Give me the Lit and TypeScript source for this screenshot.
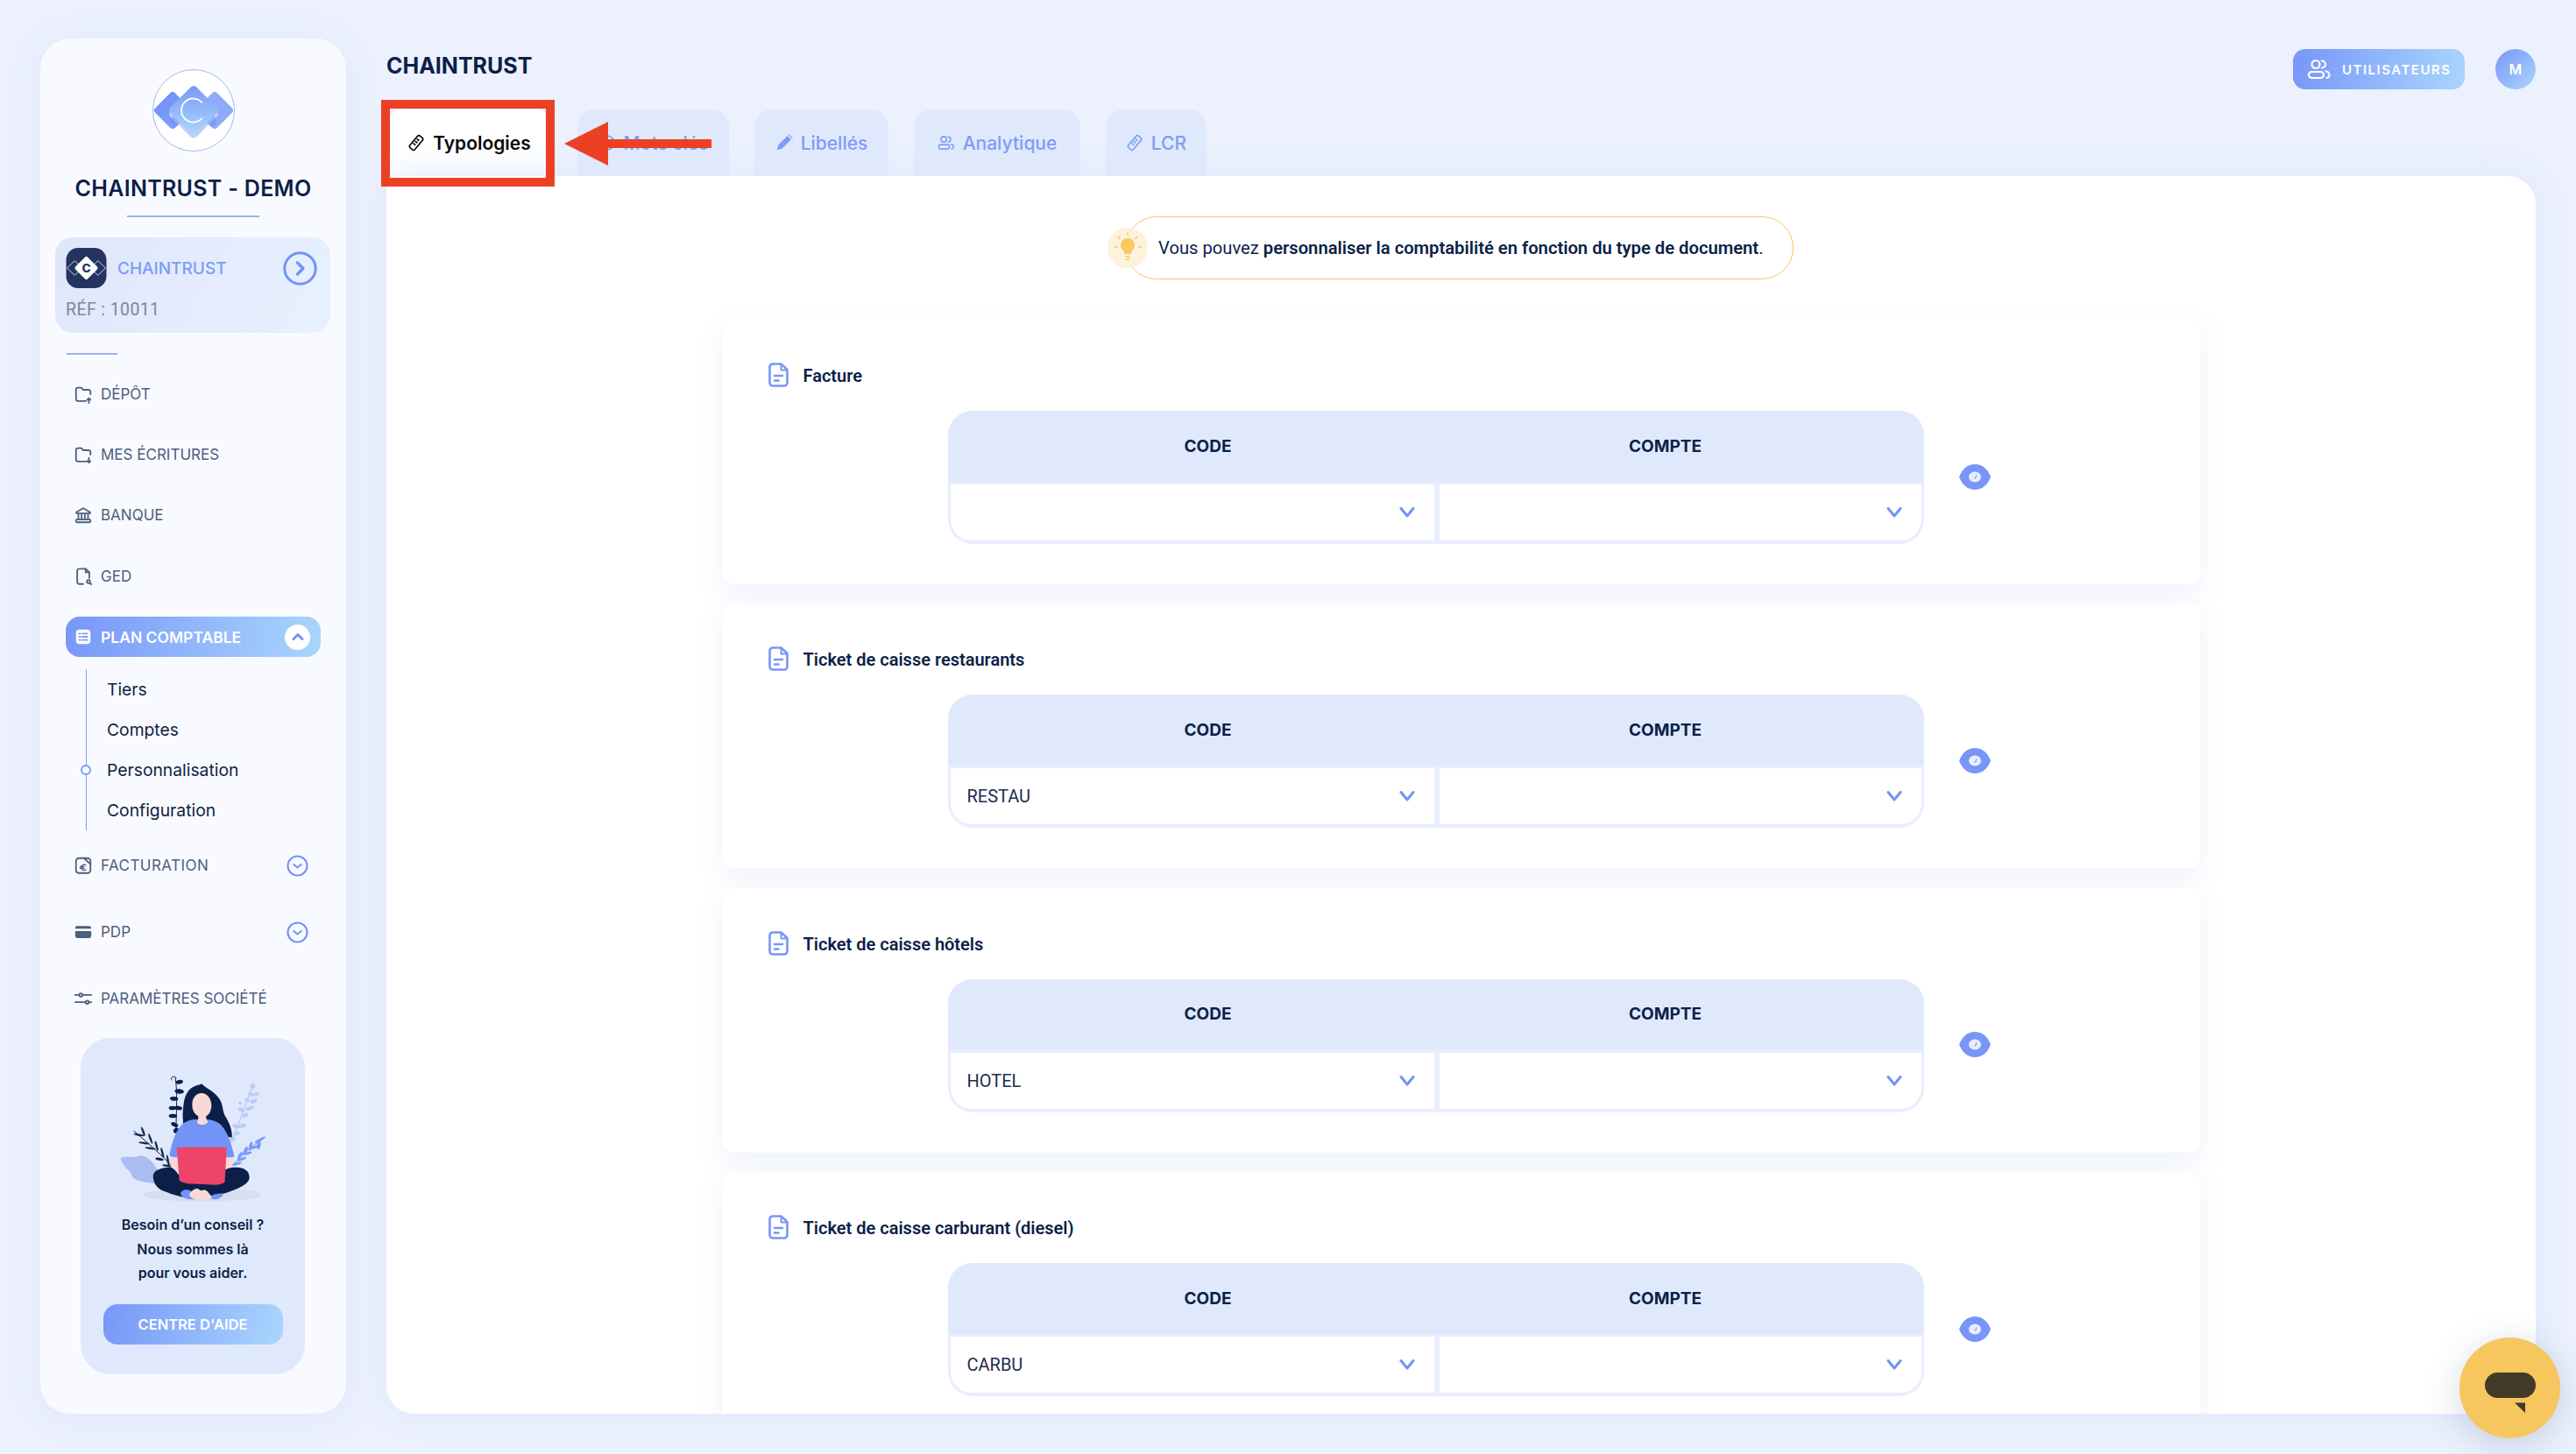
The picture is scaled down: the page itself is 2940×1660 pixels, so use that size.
import { LitElement, html, css, svg } from "lit";
import { customElement } from "lit/decorators.js";

const chevronDownCircle = html`<svg class="cc" viewBox="0 0 24 24"><circle cx="12" cy="12" r="10.6" fill="none" stroke="#7393f7" stroke-width="2"/><path d="M8 10.5l4 3.5 4-3.5" fill="none" stroke="#7393f7" stroke-width="2" stroke-linecap="round" stroke-linejoin="round"/></svg>`;

const nav = {
  up: svg`<path d="M15.5 20.5H5.5a2.5 2.5 0 0 1-2.5-2.5V6.5A2.5 2.5 0 0 1 5.5 4h4l2.2 2.5h6.8a2.5 2.5 0 0 1 2.5 2.5v3" /><path d="M19 23v-6M17 19l2-2 2 2"/>`,
  down: svg`<path d="M15.5 20.5H5.5a2.5 2.5 0 0 1-2.5-2.5V6.5A2.5 2.5 0 0 1 5.5 4h4l2.2 2.5h6.8a2.5 2.5 0 0 1 2.5 2.5v3"/><path d="M19 16v6M17 20l2 2 2-2"/>`,
  bank: svg`<path d="M3.5 8.5L12 3.5l8.500 5v1.500h-17zM6 10v7.500M10 10v7.500M14 10v7.500M18 10v7.500M4 17.500h16a1 1 0 0 1 1 1v1.500a1 1 0 0 1-1 1H4a1 1 0 0 1-1-1v-1.500a1 1 0 0 1 1-1z"/>`,
  ged: svg`<path d="M12 21.500H7a2.500 2.500 0 0 1-2.500-2.500V5A2.500 2.500 0 0 1 7 2.500h8l4.500 4.500v7"/><path d="M15 2.500V7h4.500" /><circle cx="18.500" cy="18.500" r="2"/><path d="M20 20l2 2"/>`,
  fact: svg`<rect x="3" y="3" width="18" height="18.500" rx="3.500"/><path d="M13 3l7.500 7"/><path d="M15 11.500a3.500 3.500 0 1 0 0 6M8 13.500h5M8 15.500h5" stroke-width="1.500"/>`,
  params: svg`<path d="M2 7.500h5M11 7.500h11M2 16.500h13M19 16.500h3"/><circle cx="9" cy="7.500" r="2"/><circle cx="17" cy="16.500" r="2"/>`,
};

const navIcon = (p: unknown) => html`<svg class="ni" viewBox="0 0 24 24">${p}</svg>`;

const ruler = (c: string) => html`<svg class="ti" viewBox="0 0 24 24" fill="none" stroke=${c} stroke-width="2" stroke-linecap="round" stroke-linejoin="round"><rect x="7.500" y="1.500" width="9" height="21" rx="2.500" transform="rotate(40 12 12)"/><path d="M13.500 7l2 1.700M11 10l2 1.700M8.500 13l2 1.700"/></svg>`;
const users = (c: string, cls = "ti") => html`<svg class=${cls} viewBox="0 0 28 24" fill="none" stroke=${c} stroke-width="2.200" stroke-linecap="round"><circle cx="10" cy="6.500" r="4.500"/><rect x="2" y="15" width="17" height="7" rx="3.500"/><path d="M17 2.500a4 4 0 0 1 0 8M21.500 14.500a4 4 0 0 1 4 4 3 3 0 0 1-3 3.300"/></svg>`;

const docIcon = html`<svg class="doc" viewBox="0 0 23 28" fill="none" stroke="#7896f8" stroke-width="2.600" stroke-linejoin="round" stroke-linecap="round"><path d="M14.500 1.500H5A3.500 3.500 0 0 0 1.500 5v18A3.500 3.500 0 0 0 5 26.500h13a3.500 3.500 0 0 0 3.500-3.500V8z"/><path d="M14.500 2v6.500h6.500" stroke-width="2"/><path d="M7 15h9M7 20.500h4.500"/></svg>`;
const chev = html`<svg class="chev" viewBox="0 0 18 14" fill="none" stroke="#7393f7" stroke-width="3" stroke-linecap="round" stroke-linejoin="round"><path d="M2 2.500l7 8.500 7-8.500"/></svg>`;
const eye = html`<svg class="eye" viewBox="0 0 36 29"><path fill="#7896f8" d="M0 14.500C3.500 5 10 0 18 0s14.500 5 18 14.500C32.500 24 26 29 18 29S3.500 24 0 14.500z"/><ellipse cx="18" cy="14.500" rx="7" ry="6" fill="#e8eeff"/><path d="M20 11.500c.8 3-1 5.500-3.500 5 2 -.5 2.200-3 3.500-5z" fill="#7896f8"/></svg>`;

const leaf = (x: number, y: number, rx: number, ry: number, a: number) =>
  svg`<ellipse cx=${x} cy=${y} rx=${rx} ry=${ry} transform="rotate(${a} ${x} ${y})"/>`;

const illustration = html`<svg class="illu" viewBox="0 0 600 510">
  <ellipse cx="332" cy="462" rx="202" ry="23" fill="#d5dff0"/>
  <path fill="#a9bdf0" d="M52 338c12-12 40 0 62-8 18-6 36 6 52 26 16 22 30 44 38 68-20 4-50-2-72-6-18-4-40-10-44-28-4-14-22-16-36-52z"/>
  <g fill="#bccdf5"><path d="M505 92L432 282" stroke="#bccdf5" stroke-width="4"/>
    <circle cx="505" cy="90" r="9"/>
    ${leaf(516,118,12,6,-15)}${leaf(498,118,10,6,30)}${leaf(508,142,13,7,-15)}${leaf(486,138,9,6,40)}${leaf(495,166,14,7,-20)}${leaf(466,172,12,7,30)}${leaf(480,190,12,7,-20)}${leaf(462,148,6,6,0)}${leaf(470,226,14,7,-15)}${leaf(448,228,12,7,20)}${leaf(450,252,12,6,-15)}${leaf(436,272,12,7,-30)}</g>
  <g fill="#7b99f8" stroke="#7b99f8"><path d="M548 266C510 290 470 320 436 362" stroke-width="3" fill="none"/>
    ${leaf(530,274,20,4,-30)}${leaf(526,292,6,14,10)}${leaf(498,296,5,15,15)}${leaf(480,312,5,15,25)}${leaf(462,328,5,14,30)}${leaf(510,300,14,4,-20)}${leaf(488,320,14,4,-15)}${leaf(468,340,16,4,-20)}${leaf(450,356,18,4,-15)}</g>
  <g fill="#0c1f48"><path d="M244 64c-6-12-22-6-16 6M240 62c8 40 4 120 2 190" fill="none" stroke="#0c1f48" stroke-width="3"/>
    ${leaf(254,76,13,7,-10)}${leaf(254,108,16,8,5)}${leaf(236,133,14,7,5)}${leaf(250,165,14,7,5)}${leaf(230,165,12,7,5)}${leaf(232,192,14,7,0)}${leaf(238,222,13,7,25)}${leaf(243,242,10,8,-40)}</g>
  <g fill="#0c1f48" stroke="#0c1f48"><path d="M98 243C140 280 200 330 235 372" stroke-width="3" fill="none"/>
    ${leaf(116,257,18,3,10)}${leaf(130,245,3,16,-20)}${leaf(133,285,18,3,8)}${leaf(155,270,3,18,-20)}${leaf(155,303,18,3,8)}${leaf(176,295,3,17,-15)}${leaf(186,340,14,4,10)}${leaf(196,318,3,17,-15)}${leaf(215,345,3,20,-10)}${leaf(212,363,16,3,10)}</g>
  <path fill="#0c1f48" d="M330 82c-8 6-32 6-46 26-14 18-16 46-18 72-2 22 4 36 0 50l168 36c2-28-10-52-22-72-12-18-6-40-22-62-18-24-46-36-60-50z"/>
  <path fill="#f9d9d5" d="M224 322c-4 14-6 40 12 60l30-8-10-54z M436 322c4 14 6 40-12 60l-30-8 10-54z"/>
  <path fill="#7393f7" d="M270 216c18-12 34-12 44-12l34 0c14 2 34 4 50 20 16 16 36 60 44 108-20 4-36 0-48-2l-2 30H256l-4-28c-10 4-22 2-32-4 8-50 26-96 50-112z"/>
  <path fill="#f9d9d5" d="M330 114c18 0 34 18 34 42 0 20-10 34-18 36-2 10 4 16 6 22-10 12-30 12-38 0 4-8 6-14 4-22-12-6-20-18-20-38 0-24 14-40 32-40z"/>
  <path fill="#0c1f48" d="M164 396c4-20 30-28 60-28 20 4 30 40 60 54l94-4c14-30 30-50 70-50 30 0 46 14 46 34 0 24-40 40-70 50-22 8-50 14-64 16-16-4-30-22-46-22-16 0-30 24-48 24-20-4-50-14-70-22-16-8-32-24-32-52z"/>
  <path fill="#7393f7" d="M258 458c2-12 18-16 30-12 12 4 22 20 26 30-20 4-50 2-56-18z M354 468c16-6 34-12 50-10-2 14-20 20-30 20-8 0-16-4-20-10z"/>
  <path fill="#f9d9d5" d="M288 460c8-12 22-22 30-18 6 4 8 6 12 6 6-2 10-4 16 0 6 4 14 14 20 24-12 6-30 6-40 4-14 4-34 2-38-16z"/>
  <path fill="#ee4469" d="M249 299h163c3 0 4 2 4 5l-6 112c-2 6-10 10-30 12l-100-4c-16-4-24-8-26-12l-9-108c0-3 1-5 4-5z"/>
</svg>`;

const logo = html`<svg class="logo" viewBox="0 0 94 94">
  <defs>
    <linearGradient id="lg1" x1="0" y1="0" x2="1" y2="1"><stop offset="0" stop-color="#7796f8"/><stop offset="1" stop-color="#aedafc"/></linearGradient>
    <linearGradient id="lg2" x1="0" y1="0" x2="1" y2="0"><stop offset="0" stop-color="#7393f7"/><stop offset="1" stop-color="#7f9ff8"/></linearGradient>
  </defs>
  <circle cx="47" cy="47" r="46.500" fill="#fff" stroke="#a4b6ee" stroke-width="1"/>
  <rect x="7" y="31" width="32" height="32" rx="4" fill="url(#lg2)" transform="rotate(45 23 47)"/>
  <rect x="55" y="31" width="32" height="32" rx="4" fill="#8eabf9" transform="rotate(45 71 47)"/>
  <rect x="26" y="30" width="42" height="42" rx="5" fill="#c5d1fa" transform="rotate(45 47 51)"/>
  <path d="M26 47l10 10-10 10-6-6zM68 47l-10 10 10 10 6-6z" fill="#6f8ff5" opacity=".55"/>
  <rect x="26" y="26" width="42" height="42" rx="5" fill="url(#lg1)" transform="rotate(45 47 47)"/>
  <path d="M57 38.500a13.500 13.500 0 1 0 0 17" fill="none" stroke="#fff" stroke-width="1.800"/>
</svg>`;

const companyIcon = html`<svg class="co" viewBox="0 0 47 47">
  <rect width="47" height="47" rx="14" fill="#253360"/>
  <g fill="none" stroke="#cfd6ea" stroke-width="1"><path d="M10 15L1 23.500 10 32M37 15l9 8.500-9 8.500M10 15l7 7M10 32l7-7M37 15l-7 7M37 32l-7-7"/></g>
  <rect x="13.500" y="13.500" width="20" height="20" rx="2" fill="#fff" transform="rotate(45 23.500 23.500)"/>
  <text x="23.500" y="28.500" text-anchor="middle" font-family="Inter, sans-serif" font-weight="800" font-size="14" fill="#253360">C</text>
</svg>`;

@customElement("app-root")
export class AppRoot extends LitElement {
  static styles = css`
    :host { display: block; width: 2940px; height: 1660px; position: relative; overflow: hidden; background: #ecf1fd; font-family: "Inter", "Liberation Sans", sans-serif; color: #0c1f48; }
    * { box-sizing: border-box; }
    .root { display: flex; gap: 46px; height: 1660px; padding: 44px 46px 46px; }

    .side { width: 349px; flex: none; background: #f9faff; border-radius: 34px; box-shadow: 0 4px 40px #dfe6fc; padding-top: 35px; display: flex; flex-direction: column; }
    .logo { width: 94px; height: 94px; align-self: center; display: block; }
    .brand { margin-top: 27px; text-align: center; font-weight: 600; font-size: 25px; line-height: 30px; color: #0c1f48; letter-spacing: .3px; white-space: nowrap; }
    .rule { width: 151px; height: 2px; background: #9db0ee; margin: 16px auto 0 99px; }
    .company { margin: 23px 18px 0 17px; height: 109px; border-radius: 20px; background: linear-gradient(120deg, #dfe6fb, #e8f1ff); padding: 12px 0 0 12px; }
    .co-row { display: flex; align-items: center; }
    .co { width: 47px; height: 46px; flex: none; }
    .co-name { margin-left: 12px; font-size: 19px; font-weight: 500; color: #7a9bf8; flex: 1; }
    .co-arrow { width: 39px; height: 39px; margin-right: 15px; flex: none; }
    .ref { font-family: "Roboto", sans-serif; font-size: 19.500px; color: #7c869f; margin-top: 13px; line-height: 24px; letter-spacing: .4px; }
    .rule2 { width: 58px; height: 1.500px; background: #9db0ee; margin: 23px 0 0 30px; }

    .group { display: flex; flex-direction: column; margin: 0 29px; }
    .group.a { gap: 23.400px; margin-top: 22px; }
    .group.b { gap: 30px; margin-top: 17px; }
    .item { height: 46px; display: flex; align-items: center; padding-left: 9px; font-size: 17px; color: #4e5e80; white-space: nowrap; }
    .item .label { margin-left: 9px; flex: 1; }
    .item .wide { letter-spacing: .45px; }
    .ni { width: 22px; height: 22px; flex: none; fill: none; stroke: #4e5e80; stroke-width: 2; stroke-linecap: round; stroke-linejoin: round; }
    .cc { width: 25px; height: 25px; flex: none; margin-right: 14px; }
    .item.active { background: linear-gradient(100deg, #7896f8, #a9d6fd); border-radius: 16px; color: #fff; font-weight: 600; padding-right: 12px; font-size: 17.500px; }
    .pill-up { width: 29px; height: 29px; border-radius: 50%; background: #fff; display: flex; align-items: center; justify-content: center; }
    .pill-up svg { width: 14px; height: 10px; }
    .sub { margin: 14px 0 0 52px; border-left: 1.500px solid #7a9bf8; width: 300px; padding-left: 23px; position: relative; }
    .sub div { height: 46px; line-height: 46px; font-size: 19.300px; color: #0e1f44; }
    .dot { position: absolute; left: -7px; top: 109px; width: 12px; height: 12px; border-radius: 50%; background: #f9faff; border: 2px solid #7a9bf8; }

    .help { margin: 22px 0 0 46px; width: 256px; height: 384px; background: #e0e9fc; border-radius: 34px; padding-top: 25px; display: flex; flex-direction: column; align-items: center; }
    .illu { width: 200px; height: 170px; flex: none; }
    .help p { margin: 5px 0 0; text-align: center; font-size: 16px; font-weight: 600; line-height: 27.500px; color: #0c1f48; }
    .help-btn { margin-top: 21px; width: 205px; height: 46px; border-radius: 16px; background: linear-gradient(100deg, #7896f8, #a9d6fd); color: #fff; font-weight: 600; font-size: 16.500px; display: flex; align-items: center; justify-content: center; }

    .main { flex: 1; min-width: 0; display: flex; flex-direction: column; }
    .top { height: 46px; margin-top: 12px; display: flex; align-items: flex-start; }
    .title { margin-top: 4px; line-height: 30px; font-size: 25px; font-weight: 700; color: #0c1f48; flex: 1; }
    .users { width: 196px; height: 46px; border-radius: 14px; background: linear-gradient(100deg, #7896f8, #a9d6fd); color: #fff; display: flex; align-items: center; padding-left: 16px; font-weight: 600; font-size: 15px; letter-spacing: 1.500px; }
    .users svg { width: 28px; height: 24px; margin-right: 12px; }
    .avatar { width: 46px; height: 46px; border-radius: 50%; margin-left: 35px; background: linear-gradient(135deg, #7896f8, #a9d6fd); color: #fff; font-weight: 600; font-size: 16px; display: flex; align-items: center; justify-content: center; }

    .tabs { display: flex; gap: 29px; height: 76px; margin-top: 23px; }
    .tab { border-radius: 20px 20px 0 0; background: #e0e9fc; display: flex; align-items: center; justify-content: center; gap: 9px; font-size: 21px; font-weight: 500; color: #7a9bf8; white-space: nowrap; }
    .tab.on { background: #fff; color: #000; font-weight: 600; }
    .w1 { width: 189px; } .w2 { width: 173px; } .w3 { width: 153px; } .w4 { width: 190px; } .w5 { width: 115px; }
    .ti { width: 20px; height: 20px; flex: none; }

    .panel { flex: 1; min-height: 0; background: #fff; border-radius: 0 32px 32px 32px; box-shadow: 0 0 40px #dfe6fc; overflow: hidden; padding-top: 46px; display: flex; flex-direction: column; align-items: center; }
    .tip { width: 763px; height: 72px; flex: none; margin-left: -4px; border: 1.500px solid #f6c75f; border-radius: 36px; background: #fff; position: relative; display: flex; align-items: center; padding-left: 37px; font-family: "Roboto", sans-serif; font-size: 20.200px; color: #0c1f48; white-space: nowrap; }
    .tip b { font-weight: 600; }
    .bulb { position: absolute; left: -21px; top: 12px; width: 46px; height: 46px; }

    .cards { margin-top: 46px; display: flex; flex-direction: column; gap: 22.400px; width: 1686px; flex: none; }
    .card { height: 302px; flex: none; background: #fff; border-radius: 12px; box-shadow: 0 10px 30px rgba(120, 145, 235, .13); padding: 49px 52px 0; }
    .c-title { height: 28px; display: flex; align-items: center; gap: 17px; font-family: "Roboto", sans-serif; font-weight: 600; font-size: 20px; color: #0c1f48; }
    .c-title span { position: relative; top: 1px; }
    .doc { width: 23px; height: 28px; flex: none; }
    .c-row { margin: 27px 0 0 205px; display: flex; align-items: center; gap: 40px; }
    .table { width: 1114px; height: 152px; background: #e8eefe; border-radius: 28px; overflow: hidden; padding: 0 3px 4px; }
    .head { height: 81px; margin: 0 -3px; padding: 0 34px 1px 36px; background: #e0e9fc; display: grid; grid-template-columns: 1fr 1fr; align-items: center; text-align: center; font-weight: 700; font-size: 19px; color: #0c1f48; }
    .cells { margin-top: 3px; display: grid; grid-template-columns: 552px 550px; gap: 6px; height: 64px; }
    .cell { background: #fff; display: flex; align-items: center; padding: 0 22px 0 19px; font-family: "Roboto", sans-serif; font-size: 20px; color: #1c2d50; }
    .cell:first-child { border-radius: 0 0 0 24px; }
    .cell:last-child { border-radius: 0 0 24px 0; }
    .val { flex: 1; }
    .chev { width: 18px; height: 14px; flex: none; }
    .eye { width: 36px; height: 29px; flex: none; margin-top: -2px; }

    .note { position: absolute; left: 435px; top: 114px; width: 198px; height: 99px; border: 10px solid #ec4024; }
    .arrow { position: absolute; left: 644px; top: 139px; width: 168px; height: 50px; }

    .chat { position: absolute; left: 2807px; top: 1527px; width: 115px; height: 115px; border-radius: 50%; background: #f6c75f; box-shadow: 0 8px 40px rgba(60, 80, 120, .22); }
    .chat svg { position: absolute; left: 29px; top: 40px; width: 58px; height: 47px; }
  `;

  private card(name: string, val: string) {
    return html`<div class="card">
      <div class="c-title">${docIcon}<span>${name}</span></div>
      <div class="c-row">
        <div class="table">
          <div class="head"><span>CODE</span><span>COMPTE</span></div>
          <div class="cells">
            <div class="cell"><span class="val">${val}</span>${chev}</div>
            <div class="cell"><span class="val"></span>${chev}</div>
          </div>
        </div>
        ${eye}
      </div>
    </div>`;
  }

  render() {
    return html`<div class="root">
      <aside class="side">
        ${logo}
        <div class="brand">CHAINTRUST - DEMO</div>
        <div class="rule"></div>
        <div class="company">
          <div class="co-row">
            ${companyIcon}
            <span class="co-name">CHAINTRUST</span>
            <svg class="co-arrow" viewBox="0 0 39 39" fill="none" stroke="#7393f7"><circle cx="19.500" cy="19.500" r="17.700" stroke-width="3"/><path d="M16.500 13l6.500 6.500-6.500 6.500" stroke-width="3.500" stroke-linecap="round" stroke-linejoin="round"/></svg>
          </div>
          <div class="ref">RÉF : 10011</div>
        </div>
        <div class="rule2"></div>
        <div class="group a">
          <div class="item">${navIcon(nav.up)}<span class="label">DÉPÔT</span></div>
          <div class="item">${navIcon(nav.down)}<span class="label">MES ÉCRITURES</span></div>
          <div class="item">${navIcon(nav.bank)}<span class="label">BANQUE</span></div>
          <div class="item">${navIcon(nav.ged)}<span class="label">GED</span></div>
          <div class="item active">
            <svg class="ni" style="stroke:none" viewBox="0 0 24 24"><rect x="3" y="3" width="18" height="18" rx="4" fill="#fff"/><path d="M7 8h1.500M7 12h1.500M7 16h1.500M11 8h6M11 12h6M11 16h6" stroke="#7f9cf8" stroke-width="2" stroke-linecap="round"/></svg>
            <span class="label">PLAN COMPTABLE</span>
            <span class="pill-up"><svg viewBox="0 0 14 10" fill="none" stroke="#7393f7" stroke-width="3" stroke-linecap="round" stroke-linejoin="round"><path d="M2 7.500l5-5 5 5"/></svg></span>
          </div>
        </div>
        <div class="sub">
          <span class="dot"></span>
          <div>Tiers</div><div>Comptes</div><div>Personnalisation</div><div>Configuration</div>
        </div>
        <div class="group b">
          <div class="item">${navIcon(nav.fact)}<span class="label wide">FACTURATION</span>${chevronDownCircle}</div>
          <div class="item"><svg class="ni" style="stroke:none" viewBox="0 0 24 24"><path fill="#4e5e80" d="M4.500 4.500h15A2.500 2.500 0 0 1 22 7v1H2V7a2.500 2.500 0 0 1 2.500-2.500zM2 11h20v6a2.500 2.500 0 0 1-2.500 2.500h-15A2.500 2.500 0 0 1 2 17z"/></svg><span class="label">PDP</span>${chevronDownCircle}</div>
          <div class="item">${navIcon(nav.params)}<span class="label">PARAMÈTRES SOCIÉTÉ</span></div>
        </div>
        <div class="help">
          ${illustration}
          <p>Besoin d’un conseil ?<br />Nous sommes là<br />pour vous aider.</p>
          <div class="help-btn">CENTRE D'AIDE</div>
        </div>
      </aside>

      <main class="main">
        <div class="top">
          <div class="title">CHAINTRUST</div>
          <div class="users">${users("#fff", "u")}UTILISATEURS</div>
          <div class="avatar">M</div>
        </div>
        <div class="tabs">
          <div class="tab on w1">${ruler("#000")}Typologies</div>
          <div class="tab w2"><svg class="ti" viewBox="0 0 24 24" fill="none" stroke="#7a9bf8" stroke-width="2.200"><circle cx="12" cy="12" r="9.500"/><circle cx="12" cy="12" r="3.500"/></svg>Mots clés</div>
          <div class="tab w3"><svg class="ti" viewBox="0 0 24 24" fill="#7a9bf8"><path d="M16.500 2.500l5 5L9 20l-7 2 2-7zM17.500 1l1.500-.5 4.500 4.500-.5 1.500z"/></svg>Libellés</div>
          <div class="tab w4">${users("#7a9bf8")}Analytique</div>
          <div class="tab w5">${ruler("#7a9bf8")}LCR</div>
        </div>
        <section class="panel">
          <div class="tip">
            <svg class="bulb" viewBox="0 0 46 46">
              <circle cx="23" cy="23" r="23" fill="#fdf2dc"/>
              <path fill="#f7c95f" d="M23 12a8 8 0 0 1 5 14.200c-.8.800-1 2-1.200 3.800h-7.600c-.2-1.800-.4-3-1.200-3.800A8 8 0 0 1 23 12zM20 32h6v1.500h-6zM21 35h4v1.500h-4z"/>
              <path stroke="#f7c95f" stroke-width="1.500" stroke-linecap="round" d="M23 6v2.500M12.500 10.500l1.800 2M33.500 10.500l-1.800 2M8 22h2.500M35.500 22H38"/>
            </svg>
            <span>Vous pouvez <b>personnaliser la comptabilité en fonction du type de document</b>.</span>
          </div>
          <div class="cards">
            ${this.card("Facture", "")}
            ${this.card("Ticket de caisse restaurants", "RESTAU")}
            ${this.card("Ticket de caisse hôtels", "HOTEL")}
            ${this.card("Ticket de caisse carburant (diesel)", "CARBU")}
          </div>
        </section>
      </main>
    </div>
    <div class="note"></div>
    <svg class="arrow" viewBox="0 0 168 50"><path fill="#ec4024" d="M0 25L50 0v20h118v10H50v20z"/></svg>
    <div class="chat"><svg viewBox="0 0 58 47"><rect width="58" height="29" rx="14.500" fill="#433a27"/><path d="M34 34.500h12V46z" fill="#433a27"/></svg></div>`;
  }
}
